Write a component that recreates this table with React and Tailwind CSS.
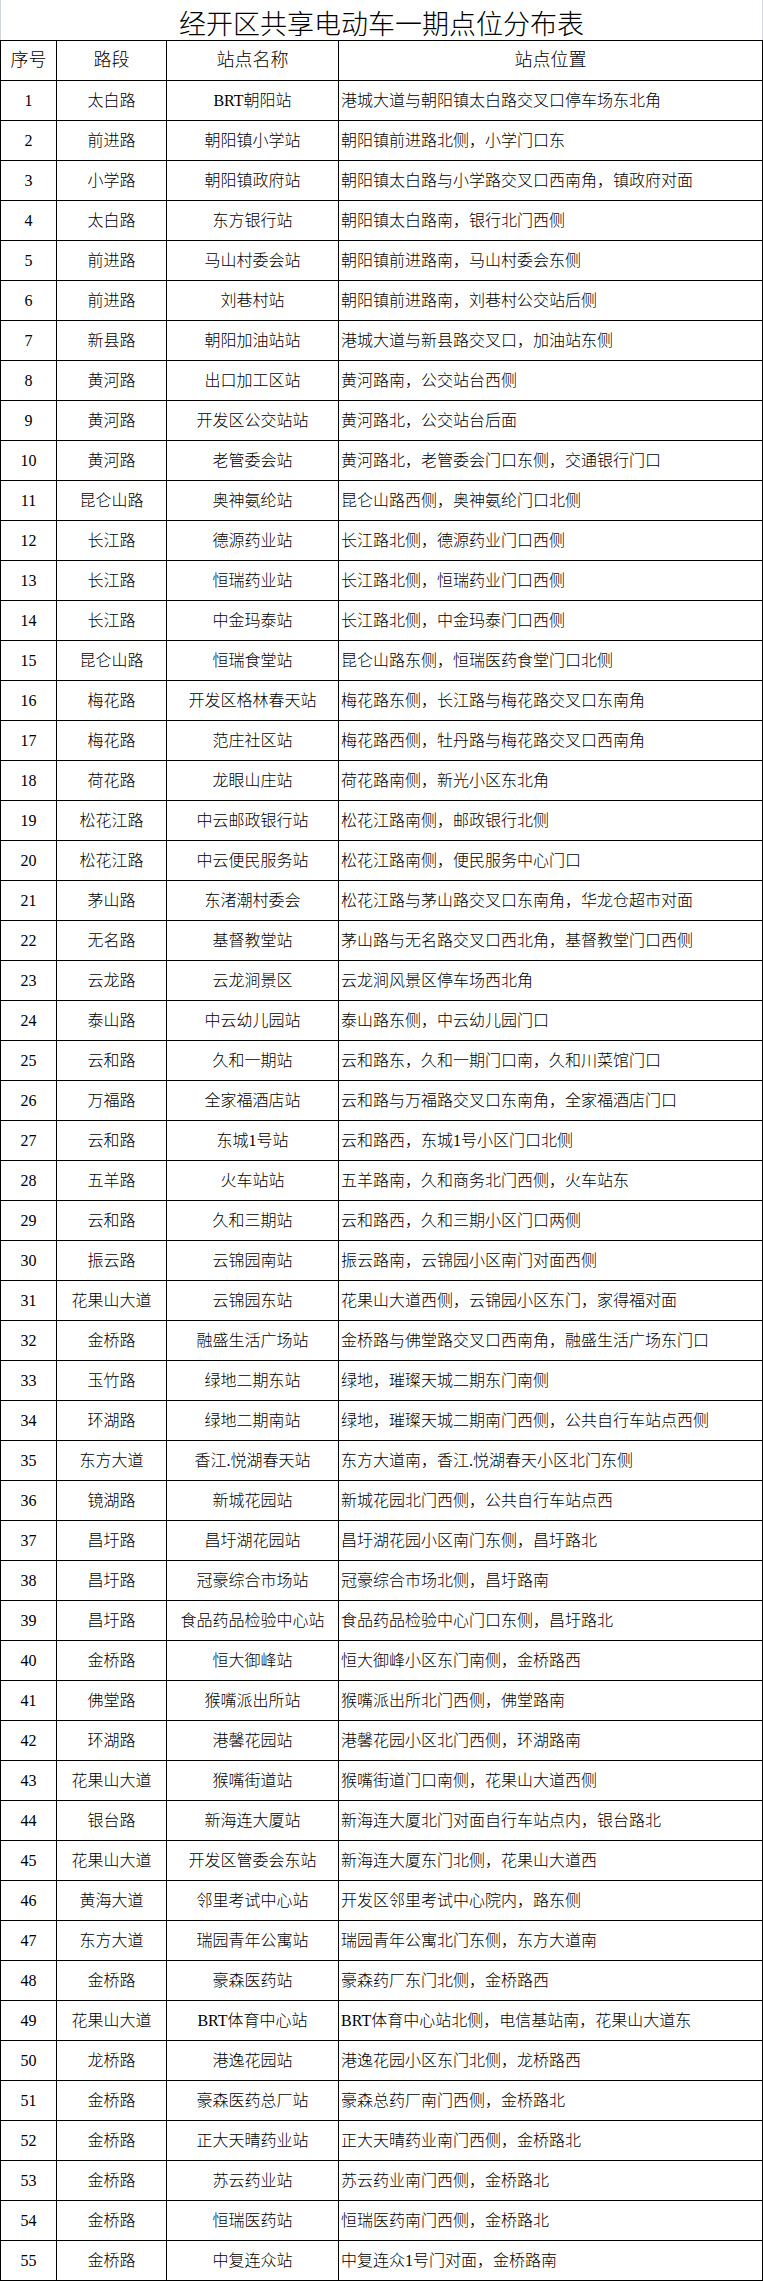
const rows = [
  ['太白路', 'BRT朝阳站', '港城大道与朝阳镇太白路交叉口停车场东北角'],
  ['前进路', '朝阳镇小学站', '朝阳镇前进路北侧，小学门口东'],
  ['小学路', '朝阳镇政府站', '朝阳镇太白路与小学路交叉口西南角，镇政府对面'],
  ['太白路', '东方银行站', '朝阳镇太白路南，银行北门西侧'],
  ['前进路', '马山村委会站', '朝阳镇前进路南，马山村委会东侧'],
  ['前进路', '刘巷村站', '朝阳镇前进路南，刘巷村公交站后侧'],
  ['新县路', '朝阳加油站站', '港城大道与新县路交叉口，加油站东侧'],
  ['黄河路', '出口加工区站', '黄河路南，公交站台西侧'],
  ['黄河路', '开发区公交站站', '黄河路北，公交站台后面'],
  ['黄河路', '老管委会站', '黄河路北，老管委会门口东侧，交通银行门口'],
  ['昆仑山路', '奥神氨纶站', '昆仑山路西侧，奥神氨纶门口北侧'],
  ['长江路', '德源药业站', '长江路北侧，德源药业门口西侧'],
  ['长江路', '恒瑞药业站', '长江路北侧，恒瑞药业门口西侧'],
  ['长江路', '中金玛泰站', '长江路北侧，中金玛泰门口西侧'],
  ['昆仑山路', '恒瑞食堂站', '昆仑山路东侧，恒瑞医药食堂门口北侧'],
  ['梅花路', '开发区格林春天站', '梅花路东侧，长江路与梅花路交叉口东南角'],
  ['梅花路', '范庄社区站', '梅花路西侧，牡丹路与梅花路交叉口西南角'],
  ['荷花路', '龙眼山庄站', '荷花路南侧，新光小区东北角'],
  ['松花江路', '中云邮政银行站', '松花江路南侧，邮政银行北侧'],
  ['松花江路', '中云便民服务站', '松花江路南侧，便民服务中心门口'],
  ['茅山路', '东渚潮村委会', '松花江路与茅山路交叉口东南角，华龙仓超市对面'],
  ['无名路', '基督教堂站', '茅山路与无名路交叉口西北角，基督教堂门口西侧'],
  ['云龙路', '云龙涧景区', '云龙涧风景区停车场西北角'],
  ['泰山路', '中云幼儿园站', '泰山路东侧，中云幼儿园门口'],
  ['云和路', '久和一期站', '云和路东，久和一期门口南，久和川菜馆门口'],
  ['万福路', '全家福酒店站', '云和路与万福路交叉口东南角，全家福酒店门口'],
  ['云和路', '东城1号站', '云和路西，东城1号小区门口北侧'],
  ['五羊路', '火车站站', '五羊路南，久和商务北门西侧，火车站东'],
  ['云和路', '久和三期站', '云和路西，久和三期小区门口两侧'],
  ['振云路', '云锦园南站', '振云路南，云锦园小区南门对面西侧'],
  ['花果山大道', '云锦园东站', '花果山大道西侧，云锦园小区东门，家得福对面'],
  ['金桥路', '融盛生活广场站', '金桥路与佛堂路交叉口西南角，融盛生活广场东门口'],
  ['玉竹路', '绿地二期东站', '绿地，璀璨天城二期东门南侧'],
  ['环湖路', '绿地二期南站', '绿地，璀璨天城二期南门西侧，公共自行车站点西侧'],
  ['东方大道', '香江.悦湖春天站', '东方大道南，香江.悦湖春天小区北门东侧'],
  ['镜湖路', '新城花园站', '新城花园北门西侧，公共自行车站点西'],
  ['昌圩路', '昌圩湖花园站', '昌圩湖花园小区南门东侧，昌圩路北'],
  ['昌圩路', '冠豪综合市场站', '冠豪综合市场北侧，昌圩路南'],
  ['昌圩路', '食品药品检验中心站', '食品药品检验中心门口东侧，昌圩路北'],
  ['金桥路', '恒大御峰站', '恒大御峰小区东门南侧，金桥路西'],
  ['佛堂路', '猴嘴派出所站', '猴嘴派出所北门西侧，佛堂路南'],
  ['环湖路', '港馨花园站', '港馨花园小区北门西侧，环湖路南'],
  ['花果山大道', '猴嘴街道站', '猴嘴街道门口南侧，花果山大道西侧'],
  ['银台路', '新海连大厦站', '新海连大厦北门对面自行车站点内，银台路北'],
  ['花果山大道', '开发区管委会东站', '新海连大厦东门北侧，花果山大道西'],
  ['黄海大道', '邻里考试中心站', '开发区邻里考试中心院内，路东侧'],
  ['东方大道', '瑞园青年公寓站', '瑞园青年公寓北门东侧，东方大道南'],
  ['金桥路', '豪森医药站', '豪森药厂东门北侧，金桥路西'],
  ['花果山大道', 'BRT体育中心站', 'BRT体育中心站北侧，电信基站南，花果山大道东'],
  ['龙桥路', '港逸花园站', '港逸花园小区东门北侧，龙桥路西'],
  ['金桥路', '豪森医药总厂站', '豪森总药厂南门西侧，金桥路北'],
  ['金桥路', '正大天晴药业站', '正大天晴药业南门西侧，金桥路北'],
  ['金桥路', '苏云药业站', '苏云药业南门西侧，金桥路北'],
  ['金桥路', '恒瑞医药站', '恒瑞医药南门西侧，金桥路北'],
  ['金桥路', '中复连众站', '中复连众1号门对面，金桥路南'],
];

const cell = 'h-[40px] border-r border-b border-black flex items-center';

export default function App() {
  return (
    <div className="w-[763px] bg-white text-black font-light font-['Liberation_Serif','Noto_Sans_CJK_SC',serif]">
      {/* Title */}
      <div className="h-[40px] flex items-center justify-center border-x border-gray-300 pt-[4px]">
        <h1 className="text-[27px] leading-none font-light font-['Noto_Sans_CJK_SC',sans-serif]">
          经开区共享电动车一期点位分布表
        </h1>
      </div>

      {/* Table */}
      <div className="grid grid-cols-[56px_110px_172px_1fr] border-t border-l border-black">
        <div className={`${cell} justify-center text-[18px]`}>序号</div>
        <div className={`${cell} justify-center text-[18px]`}>路段</div>
        <div className={`${cell} justify-center text-[18px]`}>站点名称</div>
        <div className={`${cell} justify-center text-[18px]`}>站点位置</div>

        {rows.map(([road, name, place], i) => (
          <div key={i} className="contents">
            <div className={`${cell} justify-center text-[16px]`}>{i + 1}</div>
            <div className={`${cell} justify-center text-[16px]`}>{road}</div>
            <div className={`${cell} justify-center text-[16px] whitespace-nowrap`}>{name}</div>
            <div className={`${cell} justify-start pl-[2px] text-[16px] whitespace-nowrap`}>{place}</div>
          </div>
        ))}
      </div>
    </div>
  );
}
